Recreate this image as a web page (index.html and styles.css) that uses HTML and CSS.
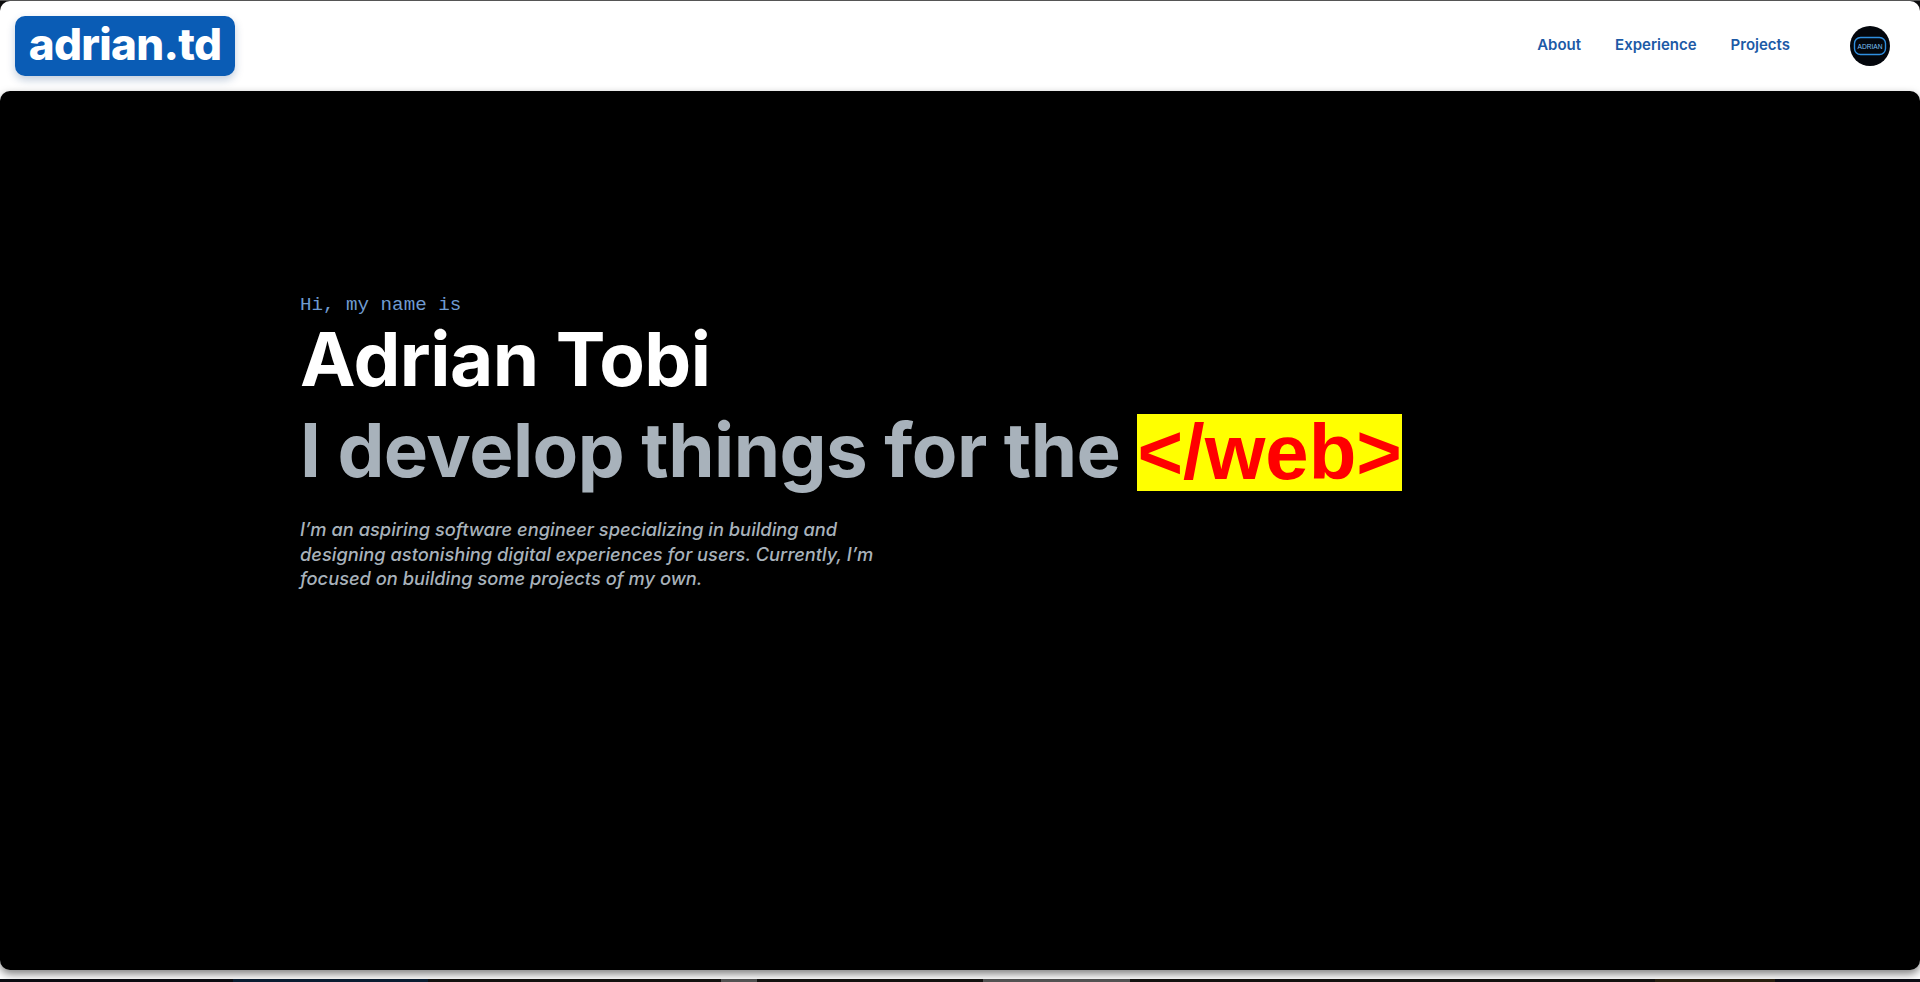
FILE: index.html
```html
<!DOCTYPE html>
<html lang="en">
<head>
<meta charset="utf-8">
<title>adrian.td</title>
<link rel="stylesheet" href="styles.css">
</head>
<body>
<div class="window">
  <header class="navbar">
    <a class="logo">adrian.td</a>
    <nav class="nav">
      <a class="nav-link">About</a>
      <a class="nav-link">Experience</a>
      <a class="nav-link">Projects</a>
      <svg class="avatar" viewBox="0 0 40 40" aria-hidden="true">
        <circle cx="20" cy="20" r="20" fill="#03060c"/>
        <rect x="4.5" y="11.5" width="31" height="17" rx="6" fill="none" stroke="#2f8fe0" stroke-width="1.4"/>
        <text x="20" y="22.8" class="avatar-text" text-anchor="middle">ADRIAN</text>
      </svg>
    </nav>
  </header>
  <main class="hero">
    <p class="hello">Hi, my name is</p>
    <h1 class="name">Adrian Tobi</h1>
    <h2 class="tagline">I develop things for the <span class="web">&lt;/web&gt;</span></h2>
    <p class="intro">I’m an aspiring software engineer specializing in building and designing astonishing digital experiences for users. Currently, I’m focused on building some projects of my own.</p>
  </main>
</div>
<div class="strip"></div>
</body>
</html>
```
FILE: styles.css
```css
* { box-sizing: border-box; }
html, body { margin: 0; height: 982px; overflow: hidden; background: #0c0c0e; }
body { font-family: "Inter", "Liberation Sans", sans-serif; border-top: 1px solid #555; }
.window {
  height: 978px;
  background: #fff;
  border-radius: 10px 10px 0 0;
  display: flex;
  flex-direction: column;
  padding-bottom: 9px;
}
.navbar {
  height: 90px;
  flex: none;
  display: flex;
  align-items: flex-start;
  justify-content: space-between;
  padding: 15px 30px 0 15px;
}
.logo {
  width: 220px;
  height: 60px;
  background: #0a5cb5;
  color: #fff;
  border-radius: 10px;
  box-shadow: 0 4px 8px rgba(10, 60, 120, .25);
  font-size: 44px;
  font-weight: 800;
  line-height: 57px;
  text-align: center;
  letter-spacing: -.7px;
}
.nav { display: flex; align-items: center; height: 60px; }
.nav-link { color: #1c5aa6; font-size: 15px; font-weight: 600; margin: 0 34px 3px 0; }
.avatar { width: 40px; height: 40px; margin-left: 26px; }
.avatar-text { font-family: "Liberation Sans", sans-serif; font-size: 6.6px; fill: #7cc0f5; }
.hero {
  flex: 1;
  background: #000;
  border-radius: 10px;
  box-shadow: 0 4px 8px rgba(0, 0, 0, .5);
  padding: 202px 0 0 300px;
}
.hello { margin: 0; color: #6f9bd0; font: 19.2px/24px "Liberation Mono", monospace; }
.name { margin: 0; color: #fff; font-size: 74.5px; font-weight: 700; line-height: 84px; letter-spacing: -.5px; }
.tagline { margin: 3px 0 0; color: #a8b2bb; font-size: 74.5px; font-weight: 700; line-height: 92px; letter-spacing: -.55px; }
.web { display: inline-block; background: #ff0; color: #f00; font-family: "Liberation Sans", sans-serif; font-size: 78px; line-height: 77px; letter-spacing: 0; vertical-align: -2px; }
.intro { margin: 21px 0 0; width: 590px; color: #a8b2bb; font-size: 18.3px; font-weight: 500; font-style: italic; line-height: 24.5px; }
.strip {
  height: 3px;
  background: linear-gradient(90deg, #0b0d12 233px, #0a1e33 233px, #0a1e33 428px, #141210 428px, #141210 721px, #555 721px, #555 757px, #141210 757px, #141210 983px, #555 983px, #555 1130px, #141210 1130px, #141210 1655px, #2a2010 1655px, #2a2010 1775px, #0c0c14 1775px);
}
```
